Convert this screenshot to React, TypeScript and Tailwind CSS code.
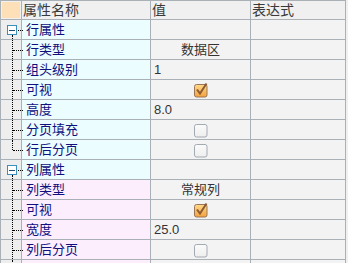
import { FC } from 'react'

type Row =
  | { kind: 'group'; name: string }
  | { kind: 'item'; name: string; value?: string; align?: 'left' | 'center'; check?: boolean; last?: boolean; tone: 'row' | 'col' }

const ROWS: Row[] = [
  { kind: 'group', name: '行属性' },
  { kind: 'item', name: '行类型', value: '数据区', align: 'center', tone: 'row' },
  { kind: 'item', name: '组头级别', value: '1', align: 'left', tone: 'row' },
  { kind: 'item', name: '可视', check: true, tone: 'row' },
  { kind: 'item', name: '高度', value: '8.0', align: 'left', tone: 'row' },
  { kind: 'item', name: '分页填充', check: false, tone: 'row' },
  { kind: 'item', name: '行后分页', check: false, last: true, tone: 'row' },
  { kind: 'group', name: '列属性' },
  { kind: 'item', name: '列类型', value: '常规列', align: 'center', tone: 'col' },
  { kind: 'item', name: '可视', check: true, tone: 'col' },
  { kind: 'item', name: '宽度', value: '25.0', align: 'left', tone: 'col' },
  { kind: 'item', name: '列后分页', check: false, last: false, tone: 'col' },
]

const Check: FC<{ on: boolean }> = ({ on }) => (
  <svg width="16" height="16" viewBox="0 0 16 16">
    <defs>
      <linearGradient id="cb-on" x1="0" y1="0" x2="0" y2="1">
        <stop offset="0" stopColor="#ffd98a" />
        <stop offset="1" stopColor="#f4a23c" />
      </linearGradient>
      <linearGradient id="cb-off" x1="0" y1="0" x2="0" y2="1">
        <stop offset="0" stopColor="#fbfbfb" />
        <stop offset="1" stopColor="#eeeeee" />
      </linearGradient>
    </defs>
    <rect
      x="1.5"
      y="2.5"
      width="12.5"
      height="12.5"
      rx="2"
      fill={on ? 'url(#cb-on)' : 'url(#cb-off)'}
      stroke={on ? '#9a7656' : '#a3abb2'}
    />
    {on && <path d="M4 7.5 L7 11.5 L13.5 1.5" fill="none" stroke="#8c5a36" strokeWidth="2" />}
  </svg>
)

const Tree: FC<{ row: Row }> = ({ row }) => {
  if (row.kind === 'group') {
    return (
      <div className="relative h-full w-full">
        <div className="absolute top-[5px] left-[6px] flex h-[10px] w-[10px] items-center justify-center border border-[#3b8fbf] bg-white">
          <div className="h-px w-[6px] bg-[#1d4f7a]" />
        </div>
        <div className="absolute top-[10px] left-[17px] w-[5px] border-t border-dotted border-black" />
        <div className="absolute top-[15px] bottom-0 left-[11px] border-l border-dotted border-black" />
      </div>
    )
  }
  return (
    <div className="relative h-full w-full">
      <div
        className={`absolute top-0 left-[11px] border-l border-dotted border-black ${row.last ? 'h-[10px]' : 'bottom-0'}`}
      />
      <div className="absolute top-[10px] left-[12px] w-[10px] border-t border-dotted border-black" />
    </div>
  )
}

export default function App() {
  const line = 'border-[#a9b1b6]'
  return (
    <div className="h-[263px] w-[348px] overflow-hidden bg-[#f0f0f0] font-['Liberation_Sans','Noto_Sans_CJK_SC',sans-serif] text-[13px]">
      <div className={`w-[346px] border-r border-l ${line}`}>
        <div className={`flex h-[20px] border-t border-b ${line} bg-[#f0f0f0] text-[14px] leading-[18px] text-[#3a3a3a]`}>
          <div className={`w-[21px] border-r ${line} p-px`}>
            <div className="h-full w-full bg-[#fde0b8]" />
          </div>
          <div className={`w-[129px] border-r ${line} pl-px`}>属性名称</div>
          <div className={`w-[100px] border-r ${line} pl-px`}>值</div>
          <div className="flex-1 pl-px">表达式</div>
        </div>

        {ROWS.map((row, i) => {
          const nameBg = row.kind === 'item' && row.tone === 'col' ? 'bg-[#fdeefe]' : 'bg-[#ebfdfe]'
          return (
            <div key={i} className={`flex h-[20px] border-b ${line} leading-[19px]`}>
              <div className={`w-[21px] border-r ${line} bg-[#eeeeee]`}>
                <Tree row={row} />
              </div>
              <div className={`w-[129px] border-r ${line} ${nameBg} pl-[4px] text-[#0f0f7e]`}>{row.name}</div>
              <div
                className={`flex w-[100px] border-r ${line} bg-[#f3f3f3] text-[#333] ${
                  row.kind === 'item' && row.align === 'left' ? 'justify-start pl-[3px]' : 'justify-center'
                }`}
              >
                {row.kind === 'item' && row.value}
                {row.kind === 'item' && row.check !== undefined && (
                  <div className="flex items-center">
                    <Check on={row.check} />
                  </div>
                )}
              </div>
              <div className="flex-1 bg-[#f3f3f3]" />
            </div>
          )
        })}
        <div className="flex h-[20px]">
          <div className={`w-[21px] border-r ${line} bg-[#eeeeee]`}>
            <div className="ml-[11px] h-full border-l border-dotted border-black" />
          </div>
          <div className={`w-[129px] border-r ${line} bg-[#fdeefe]`} />
          <div className={`w-[100px] border-r ${line} bg-[#f3f3f3]`} />
          <div className="flex-1 bg-[#f3f3f3]" />
        </div>
      </div>
    </div>
  )
}
